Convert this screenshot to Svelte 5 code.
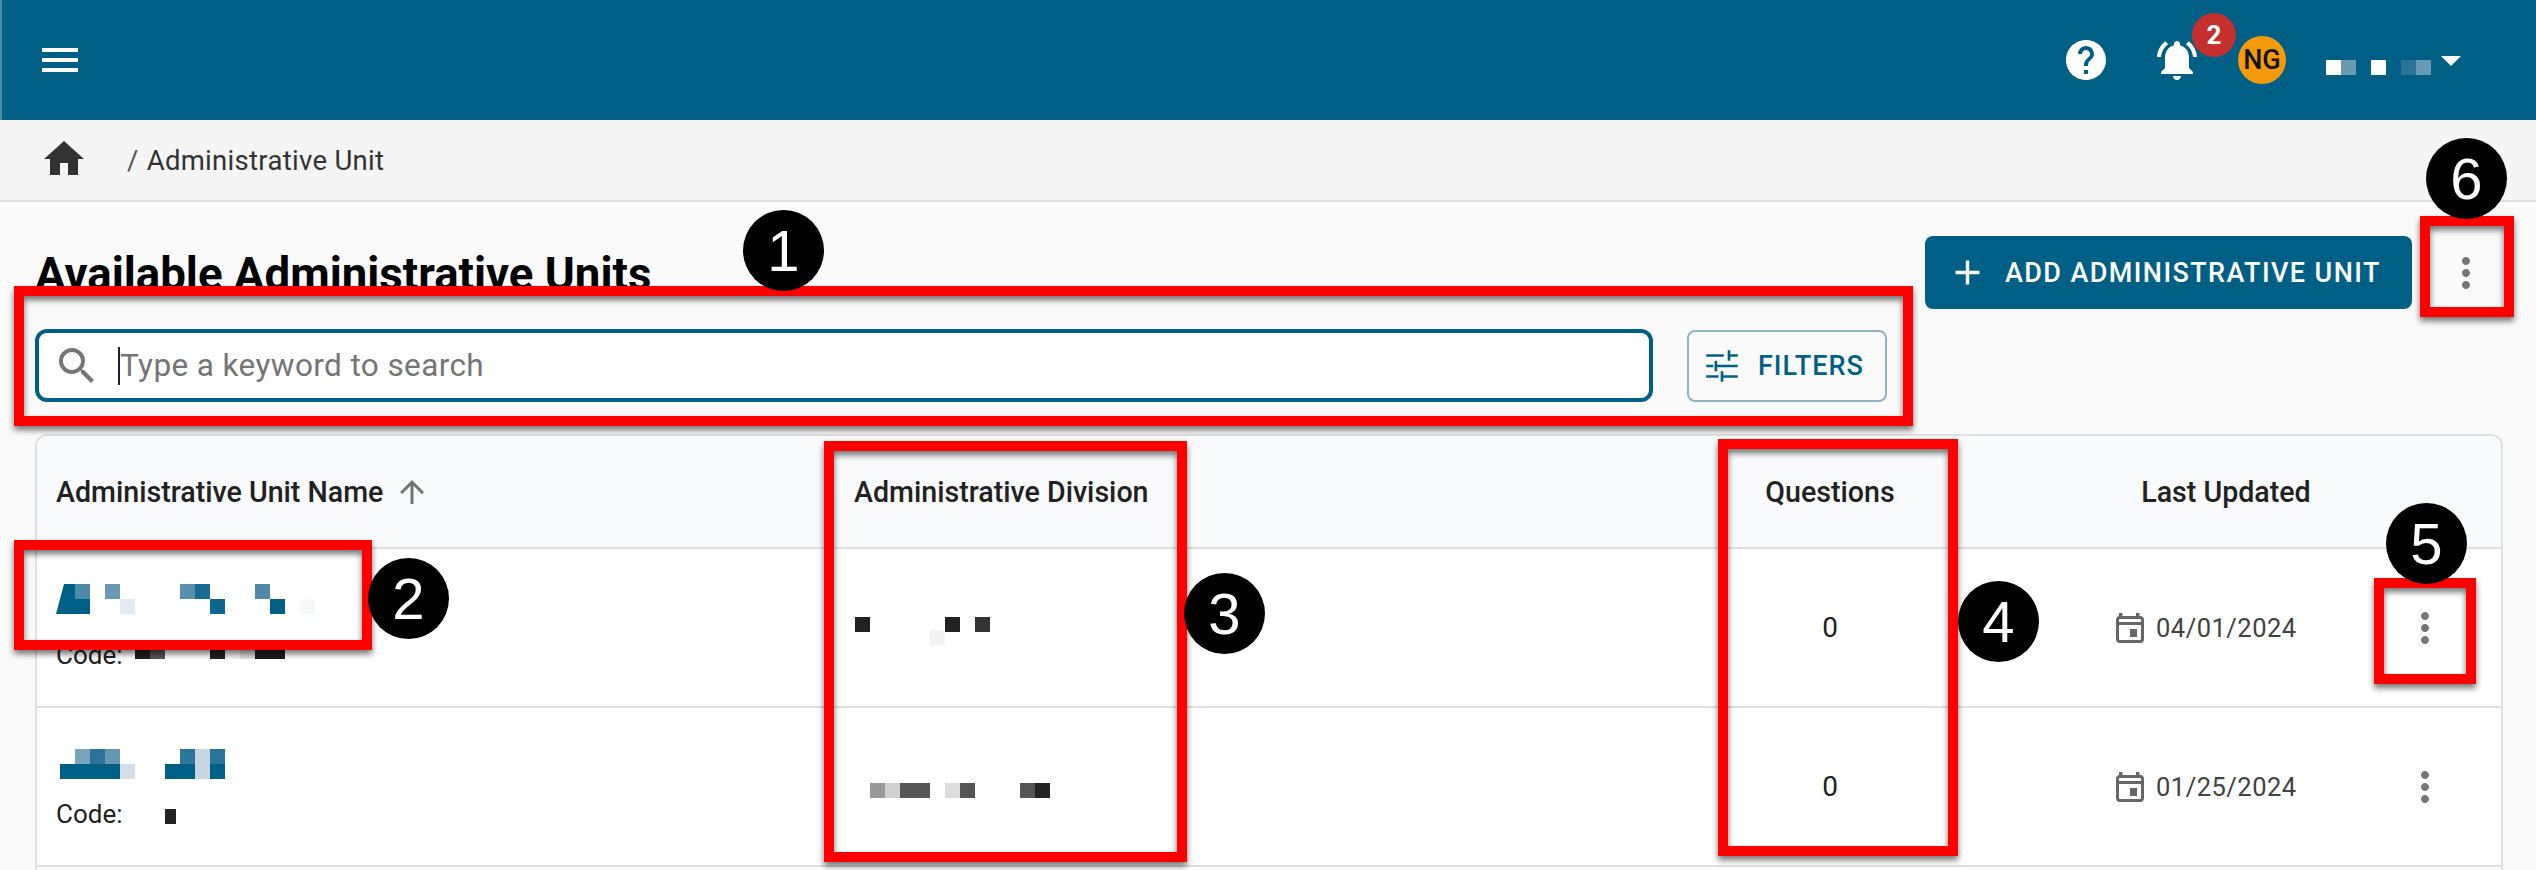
<script>
	const teal = "#005f85";

	// blurred-out values: [x, y, colour, width?], on a 15px grid
	const userName = [[0,0,"#fff"],[15,0,"#6a9ab3"],[45,0,"#fff"],[75,0,"#2b7398"],[90,0,"#6a9ab3"]];
	const rows = [
		{
			nameY: 10, divY: 19, codeY: 4, date: "04/01/2024", slant: "0,30 8,0 8,30",
			name: [[8,0,teal,11],[19,0,"#4d8aa8"],[49,0,"#6a9ab3"],[8,15,teal,26],[64,15,"#e4ebf0"],[124,0,"#5a8fab"],[139,0,"#186c91"],[154,15,"#0d6690"],[199,0,"#4f88a8"],[214,15,teal],[244,15,"#f6f8fa"]],
			code: [[15,0,"#1f1f1f"],[30,0,"#555"],[90,0,"#222"],[105,0,"#f4f4f4"],[120,0,"#e0e0e0"],[135,0,"#1c1c1c"],[150,0,"#1c1c1c"]],
			div: [[1,0,"#222"],[76,13,"#f3f3f3"],[91,0,"#222"],[121,0,"#333"]]
		},
		{
			nameY: 16, divY: 26, codeY: 10, date: "01/25/2024",
			name: [[19,0,"#7ba3bb"],[34,0,"#2b7398"],[49,0,"#6597b2"],[124,0,"#2d769b"],[139,0,"#c5d6e0"],[154,0,"#2a7499"],[4,15,teal,60],[64,15,"#d3dee6"],[109,15,teal,30],[139,15,"#c5d6e0"],[154,15,teal]],
			code: [[45,0,"#222",11]],
			div: [[16,0,"#999"],[31,0,"#d0d0d0"],[46,0,"#555",30],[91,0,"#ddd"],[106,0,"#555"],[166,0,"#555"],[181,0,"#222"]]
		}
	];

	const redBoxes = [
		[14, 286, 1899, 140],
		[14, 540, 358, 110],
		[824, 441, 363, 421],
		[1718, 439, 240, 417],
		[2374, 578, 102, 106],
		[2420, 216, 94, 101]
	];
	const markers = [
		[1, 743, 210],
		[2, 368, 558],
		[3, 1184, 573],
		[4, 1958, 581],
		[5, 2386, 503],
		[6, 2426, 138]
	];

	const more = "M12 8c1.1 0 2-.9 2-2s-.9-2-2-2-2 .9-2 2 .9 2 2 2zm0 2c-1.1 0-2 .9-2 2s.9 2 2 2 2-.9 2-2-.9-2-2-2zm0 6c-1.1 0-2 .9-2 2s.9 2 2 2 2-.9 2-2-.9-2-2-2z";
</script>

{#snippet blocks(cells, width, height, slant)}
	<svg class="mosaic" {width} {height} viewBox="0 0 {width} {height}" shape-rendering="crispEdges">
		{#if slant}<polygon points={slant} fill={teal} shape-rendering="auto" />{/if}
		{#each cells as [x, y, fill, w]}
			<rect {x} {y} width={w ?? 15} height="15" {fill} />
		{/each}
	</svg>
{/snippet}

{#snippet icon(d, size, cls)}
	<svg class={cls} width={size} height={size} viewBox="0 0 24 24" fill="currentColor"><path {d} /></svg>
{/snippet}

<div class="app">
	<header class="topbar">
		{@render icon("M3 18h18v-2H3v2zm0-5h18v-2H3v2zm0-7v2h18V6H3z", 48, "menu")}
		<div class="topbar-right">
			{@render icon("M12 2C6.48 2 2 6.48 2 12s4.48 10 10 10 10-4.48 10-10S17.52 2 12 2zm1 17h-2v-2h2v2zm2.07-7.75l-.9.92C13.45 12.9 13 13.5 13 15h-2v-.5c0-1.1.45-2.1 1.17-2.83l1.24-1.26c.37-.36.59-.86.59-1.41 0-1.1-.9-2-2-2s-2 .9-2 2H8c0-2.21 1.79-4 4-4s4 1.79 4 4c0 .88-.36 1.68-.93 2.25z", 48, "help")}
			<div class="bell">
				{@render icon("M7.58 4.08L6.15 2.65C3.75 4.48 2.17 7.3 2.03 10.5h2c.15-2.65 1.51-4.97 3.55-6.42zm12.39 6.42h2c-.15-3.2-1.73-6.02-4.12-7.85l-1.42 1.43c2.02 1.45 3.39 3.77 3.54 6.42zM18 11c0-3.07-1.64-5.64-4.5-6.32V4c0-.83-.67-1.5-1.5-1.5s-1.5.67-1.5 1.5v.68C7.63 5.36 6 7.92 6 11v5l-2 2v1h16v-1l-2-2v-5zm-6 11c.14 0 .27-.01.4-.04.65-.14 1.18-.58 1.44-1.18.1-.24.15-.5.15-.78h-4c.01 1.1.9 2 2.01 2z", 48, "")}
				<span class="badge">2</span>
			</div>
			<span class="avatar">NG</span>
			{@render blocks(userName, 105, 15)}
			<span class="caret-down"></span>
		</div>
	</header>

	<nav class="crumbs">
		{@render icon("M10 20v-6h4v6h5v-8h3L12 3 2 12h3v8z", 48, "home")}
		<span class="slash">/</span>
		<span>Administrative Unit</span>
	</nav>

	<main class="content">
		<div class="title-row">
			<h1>Available Administrative Units</h1>
			<button class="add-btn">
				{@render icon("M19 13h-6v6h-2v-6H5v-2h6V5h2v6h6v2z", 41, "")}
				ADD ADMINISTRATIVE UNIT
			</button>
			{@render icon(more, 48, "more page-more")}
		</div>

		<div class="search-row">
			<div class="search">
				{@render icon("M15.5 14h-.79l-.28-.27A6.471 6.471 0 0 0 16 9.5 6.5 6.5 0 1 0 9.5 16c1.61 0 3.09-.59 4.23-1.57l.27.28v.79l5 4.99L20.49 19l-4.99-5zm-6 0C7.01 14 5 11.99 5 9.5S7.01 5 9.5 5 14 7.01 14 9.5 11.99 14 9.5 14z", 48, "search-icon")}
				<span class="text-caret"></span>
				<input placeholder="Type a keyword to search" />
			</div>
			<button class="filters">
				<svg width="42" height="42" viewBox="0 0 24 24" fill="none" stroke="currentColor" stroke-width="1.5">
					<path d="M3 6h10M16 3v6M16 6h5M3 12h4M8.5 9v6M8.5 12h12.5M3 18h7M12 15v6M12 18h9" />
				</svg>
				FILTERS
			</button>
		</div>

		<section class="table">
			<div class="row head">
				<div class="cell name-head">
					Administrative Unit Name
					{@render icon("M4 12l1.41 1.41L11 7.83V20h2V7.83l5.58 5.59L20 12l-8-8-8 8z", 36, "sort")}
				</div>
				<div class="cell">Administrative Division</div>
				<div class="cell center">Questions</div>
				<div class="cell center">Last Updated</div>
				<div class="cell"></div>
			</div>

			{#each rows as row}
				<div class="row">
					<div class="cell name-cell">
						<div class="name-box" style="padding-top: {row.nameY}px">
							{@render blocks(row.name, 270, 30, row.slant)}
						</div>
						<div class="code">
							<span class="code-label">Code:</span>
							<div style="padding-top: {row.codeY}px">
								{@render blocks(row.code, 170, 15)}
							</div>
						</div>
					</div>
					<div class="cell">
						<div class="div-box" style="padding-top: {row.divY}px">
							{@render blocks(row.div, 200, 30)}
						</div>
					</div>
					<div class="cell center value">0</div>
					<div class="cell date">
						<svg class="cal" width="28" height="30" viewBox="0 0 28 30" fill="currentColor">
							<rect x="3" y="0" width="3.5" height="5" />
							<rect x="20" y="0" width="3.5" height="5" />
							<rect x="1.5" y="4.5" width="25" height="24" rx="2.5" fill="none" stroke="currentColor" stroke-width="3" />
							<rect x="1.5" y="9" width="25" height="3" />
							<rect x="14" y="16" width="7" height="8" />
						</svg>
						{row.date}
					</div>
					<div class="cell kebab">
						{@render icon(more, 48, "more")}
					</div>
				</div>
			{/each}
			<div class="row last"></div>
		</section>
	</main>

	{#each redBoxes as [left, top, width, height]}
		<div class="red-box" style="left: {left}px; top: {top}px; width: {width}px; height: {height}px"></div>
	{/each}
	{#each markers as [n, left, top]}
		<div class="marker" style="left: {left}px; top: {top}px">{n}</div>
	{/each}
</div>

<style>
	:global(body) {
		margin: 0;
		overflow: hidden;
	}

	.app {
		position: relative;
		width: 2536px;
		height: 870px;
		overflow: hidden;
		background: #fafafa;
		font-family: Roboto, "Liberation Sans", sans-serif;
		color: #212121;
	}

	svg {
		display: block;
		flex: none;
	}

	.topbar {
		height: 120px;
		display: flex;
		align-items: center;
		justify-content: space-between;
		padding: 0 75px 0 36px;
		background: #005f85;
		box-shadow: inset 2px 0 0 #4c8aa6;
		color: #fff;
		box-sizing: border-box;
	}

	.topbar-right {
		display: flex;
		align-items: center;
	}

	.topbar-right :global(.help) {
		margin-right: 43px;
	}

	.bell {
		position: relative;
		margin-right: 37px;
	}

	.badge {
		position: absolute;
		left: 39px;
		top: -23px;
		width: 44px;
		height: 44px;
		border-radius: 50%;
		background: #c5302e;
		font-size: 26px;
		font-weight: 700;
		display: flex;
		align-items: center;
		justify-content: center;
	}

	.avatar {
		width: 48px;
		height: 48px;
		border-radius: 50%;
		margin-right: 40px;
		background: #f59a0a;
		color: #111;
		font-size: 27px;
		font-weight: 500;
		display: flex;
		align-items: center;
		justify-content: center;
	}

	.caret-down {
		width: 0;
		height: 0;
		margin: 1px 0 0 10px;
		border-left: 10.5px solid transparent;
		border-right: 10.5px solid transparent;
		border-top: 10px solid #fff;
	}

	.topbar-right :global(.mosaic) {
		margin-top: 15px;
	}

	.crumbs {
		height: 82px;
		box-sizing: border-box;
		display: flex;
		align-items: center;
		padding-left: 40px;
		background: #f5f5f5;
		border-bottom: 2px solid #e0e0e0;
		font-size: 27.5px;
		color: #333;
		letter-spacing: 0.3px;
	}

	.crumbs :global(.home) {
		color: #333;
		margin-top: -2px;
	}

	.slash {
		margin: 0 8px 0 39px;
		color: #555;
	}

	.content {
		padding: 34px 33px 0 35px;
	}

	.title-row {
		display: flex;
		align-items: center;
		height: 73px;
	}

	h1 {
		flex: 1;
		margin: 3px 0 0;
		font-size: 45.6px;
		font-weight: 700;
		color: #000;
		white-space: nowrap;
	}

	.add-btn {
		width: 487px;
		height: 73px;
		display: flex;
		align-items: center;
		gap: 17px;
		padding: 0 0 0 22px;
		border: 0;
		border-radius: 8px;
		background: #005f85;
		color: #fff;
		font: 500 27px Roboto, sans-serif;
		letter-spacing: 1.4px;
	}

	.title-row :global(.page-more) {
		margin: 0 13px 0 30px;
	}

	.title-row :global(.more),
	.kebab :global(.more) {
		color: #757575;
	}

	.search-row {
		display: flex;
		align-items: center;
		gap: 34px;
		margin-top: 20px;
	}

	.search {
		width: 1618px;
		height: 73px;
		box-sizing: border-box;
		display: flex;
		align-items: center;
		padding-left: 14px;
		background: #fff;
		border: 4px solid #005f85;
		border-radius: 12px;
	}

	.search :global(.search-icon) {
		color: #757575;
		margin-right: 17px;
	}

	.text-caret {
		width: 2px;
		height: 38px;
		background: #212121;
	}

	.search input {
		flex: 1;
		border: 0;
		outline: 0;
		padding: 0;
		background: transparent;
		font: 400 31.5px Roboto, sans-serif;
		letter-spacing: 0.4px;
	}

	.search input::placeholder {
		color: #757575;
		opacity: 1;
	}

	.filters {
		width: 200px;
		height: 72px;
		box-sizing: border-box;
		display: flex;
		align-items: center;
		gap: 15px;
		padding: 0 0 0 12px;
		background: transparent;
		border: 2px solid #8fb3c6;
		border-radius: 8px;
		color: #005f85;
		font: 500 27px Roboto, sans-serif;
		letter-spacing: 1px;
	}

	.table {
		margin-top: 32px;
		border: 2px solid #e0e0e0;
		border-bottom: 0;
		border-radius: 12px 12px 0 0;
		overflow: hidden;
		background: #fff;
	}

	.row {
		display: grid;
		grid-template-columns: 798px 763px 464px 328px 1fr;
		height: 159px;
		box-sizing: border-box;
		border-bottom: 2px solid #e0e0e0;
		font-size: 28px;
	}

	.row.head {
		height: 113px;
		background: #f9fafc;
		font-size: 28.6px;
		font-weight: 500;
	}

	.row.last {
		border: 0;
	}

	.cell {
		display: flex;
		align-items: center;
		padding-left: 19px;
		color: #212121;
	}

	.cell.center {
		justify-content: center;
		padding-left: 0;
	}

	.name-head {
		gap: 11px;
	}

	.name-head :global(.sort) {
		color: #757575;
	}

	.name-cell {
		flex-direction: column;
		align-items: flex-start;
		justify-content: flex-start;
		padding-top: 25px;
	}

	.name-box {
		height: 66px;
		box-sizing: border-box;
	}

	.div-box {
		height: 60px;
		box-sizing: border-box;
	}

	.code {
		display: flex;
		height: 30px;
		line-height: 30px;
	}

	.code-label {
		width: 64px;
		font-size: 26px;
	}

	.date {
		gap: 12px;
		padding-left: 54px;
		color: #424242;
		font-size: 25.5px;
		letter-spacing: 0.5px;
	}

	.date .cal {
		color: #666;
	}

	.kebab {
		padding-left: 11px;
	}

	.red-box {
		position: absolute;
		box-sizing: border-box;
		border: 10px solid #f00;
		filter: drop-shadow(0 4px 3px rgba(0, 0, 0, 0.55));
	}

	.marker {
		position: absolute;
		width: 81px;
		height: 81px;
		border-radius: 50%;
		background: #000;
		color: #fff;
		font: 400 58px "Liberation Sans", Arial, sans-serif;
		display: flex;
		align-items: center;
		justify-content: center;
	}
</style>
